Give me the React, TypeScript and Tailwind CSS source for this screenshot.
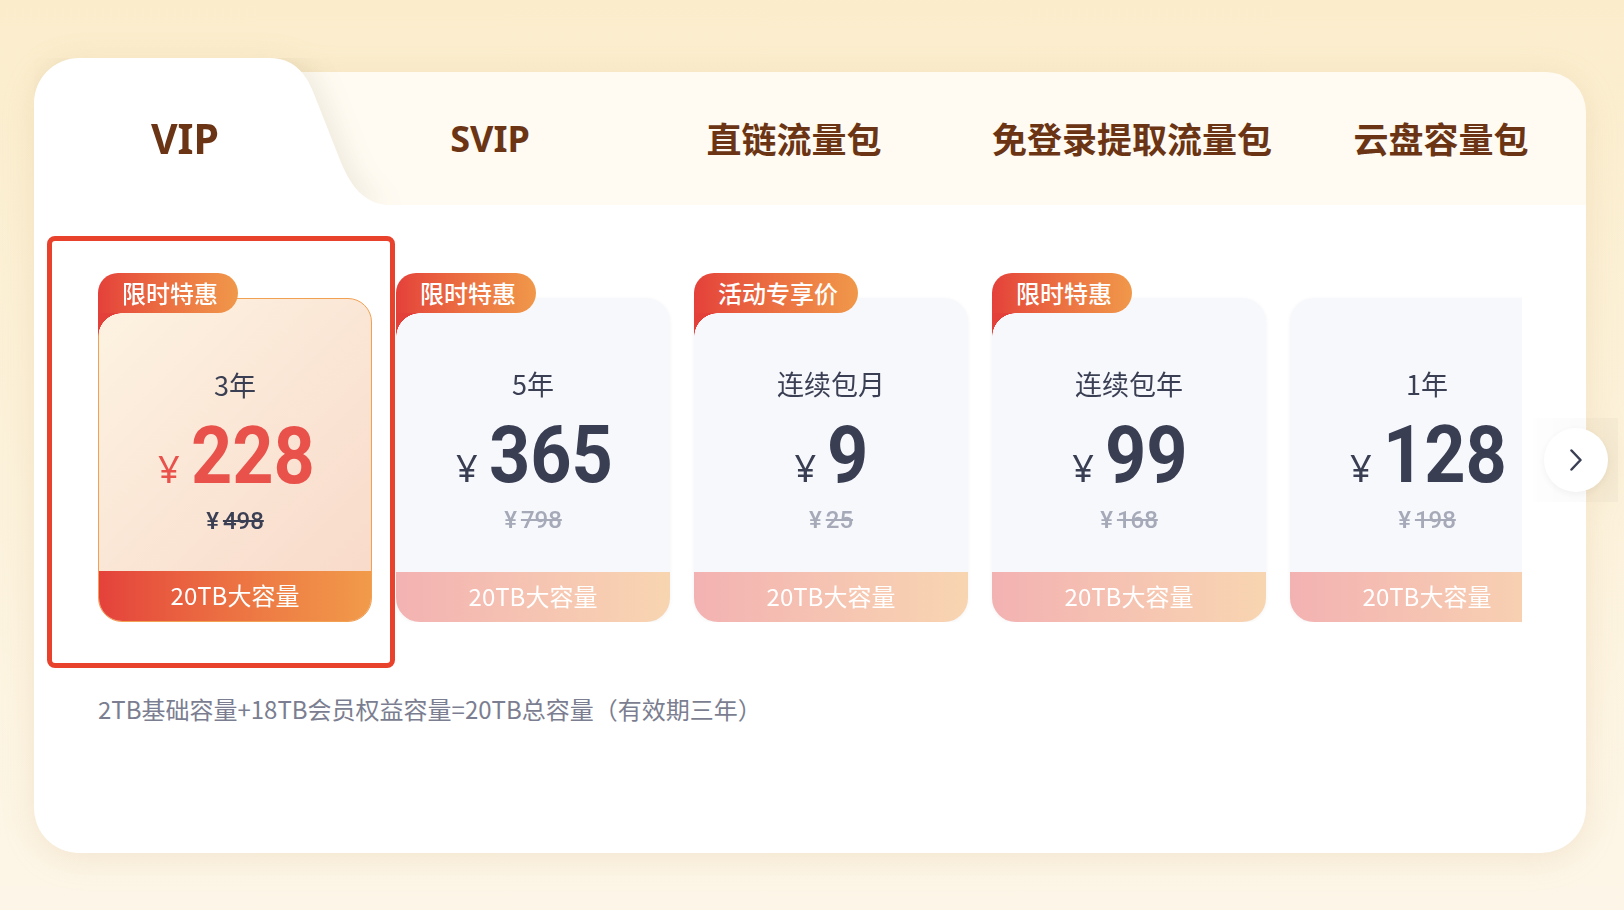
const plans = [
  { tag: "限时特惠", period: "3年", price: "228", old: "498", active: true },
  { tag: "限时特惠", period: "5年", price: "365", old: "798" },
  { tag: "活动专享价", period: "连续包月", price: "9", old: "25" },
  { tag: "限时特惠", period: "连续包年", price: "99", old: "168" },
  { tag: "", period: "1年", price: "128", old: "198" },
];

const tabs = [
  { label: "SVIP", w: "w-[308px]", latin: true },
  { label: "直链流量包", w: "w-[300px]" },
  { label: "免登录提取流量包", w: "w-[376px]" },
  { label: "云盘容量包", w: "w-[242px]" },
];

type Plan = (typeof plans)[number];

function PlanCard({ plan }: { plan: Plan }) {
  const active = !!plan.active;
  return (
    <div className="relative w-[274px] shrink-0 pt-[25px]">
      {plan.tag && (
        <>
          <div className="absolute left-0 top-0 z-10 flex h-[40px] items-center rounded-tl-[20px] rounded-r-[20px] bg-gradient-to-r from-[#e4403a] to-[#f0984a] pl-[24px] pr-[20px] text-[24px] font-medium leading-none text-white">
            {plan.tag}
          </div>
          <div className="absolute left-0 top-[40px] z-10 h-[24px] w-[24px] bg-[radial-gradient(circle_at_100%_100%,transparent_23.5px,#e4403a_24px)]" />
        </>
      )}
      <div
        className={
          active
            ? "flex h-[324px] flex-col items-center overflow-hidden rounded-[24px] rounded-tl-none border-[1.5px] border-[#f2a052] bg-[linear-gradient(135deg,#fdf3e2,#f8d8c8)]"
            : plan.tag
              ? "flex h-[324px] flex-col items-center overflow-hidden rounded-[24px] rounded-tl-none bg-[#f7f8fc] shadow-[0_1px_4px_rgba(0,0,0,0.05)]"
              : "flex h-[324px] flex-col items-center overflow-hidden rounded-[24px] bg-[#f7f8fc] shadow-[0_1px_4px_rgba(0,0,0,0.05)]"
        }
      >
        <div className="mt-[70px] text-[27px] leading-[32px] text-[#3b3f54]">{plan.period}</div>
        <div className={active ? "mt-[15px] flex items-baseline text-[#e9514b]" : "mt-[15px] flex items-baseline text-[#3a3e53]"}>
          <span className="mr-[11px] font-['Noto_Sans'] text-[38px] leading-none">¥</span>
          <span
            className="inline-block origin-left scale-x-[0.9] whitespace-nowrap font-['Roboto'] text-[80px] font-bold leading-none"
            style={{ width: plan.price.length * 40.5 }}
          >
            {plan.price}
          </span>
        </div>
        <div
          className={
            active
              ? "mt-[11px] flex items-baseline gap-[4px] font-['Roboto'] text-[24px] font-medium leading-[28px] text-[#3b3f54]"
              : "mt-[11px] flex items-baseline gap-[4px] font-['Roboto'] text-[24px] font-medium leading-[28px] text-[#a5a9b8]"
          }
        >
          <span>¥</span>
          <span className="line-through">{plan.old}</span>
        </div>
        <div
          className={
            active
              ? "mt-auto flex h-[50px] w-full items-center justify-center bg-gradient-to-r from-[#e4413b] to-[#f19b4a] pb-[3px] text-[24px] leading-none text-white"
              : "mt-auto flex h-[50px] w-full items-center justify-center bg-gradient-to-r from-[#f3b2b2] to-[#f8d5b1] pb-[3px] text-[24px] leading-none text-white"
          }
        >
          20TB大容量
        </div>
      </div>
    </div>
  );
}

export default function App() {
  return (
    <div className="min-h-screen w-full bg-gradient-to-b from-[#fbedcc] to-[#fdf6e8] pl-[34px] pt-[58px] pb-[56px] font-['Noto_Sans_CJK_SC',sans-serif]">
      <div className="w-[1552px] drop-shadow-[0_6px_16px_rgba(190,150,90,0.16)]">
        {/* Tabs */}
        <div className="relative flex h-[147px] items-end overflow-hidden">
          <div className="relative z-10 flex h-[147px] w-[302px] shrink-0 items-center justify-center pt-[14px]">
            <svg
              className="pointer-events-none absolute left-0 top-0 overflow-visible drop-shadow-[8px_0_12px_rgba(110,90,50,0.10)]"
              width="360"
              height="147"
              viewBox="0 0 360 147"
            >
              <path
                d="M0 147 V45 A45 45 0 0 1 45 0 H236 C258 0 272 14 280 36 L306 102 C316 127 330 147 356 147 Z"
                fill="#fff"
              />
            </svg>
            <span className="relative font-['Noto_Sans'] text-[41px] font-bold text-[#6b3515]">VIP</span>
          </div>
          <div className="-ml-[80px] flex h-[133px] flex-1 items-center rounded-tr-[40px] bg-[#fffbf2] pl-[80px]">
            {tabs.map((t) => (
              <div key={t.label} className={`${t.w} flex shrink-0 justify-center`}>
                <span
                  className={
                    t.latin
                      ? "font-['Noto_Sans'] text-[36px] font-bold text-[#6b3515]"
                      : "text-[35px] font-bold text-[#6b3515]"
                  }
                >
                  {t.label}
                </span>
              </div>
            ))}
          </div>
        </div>

        {/* Body */}
        <div className="relative h-[648px] rounded-b-[45px] bg-white px-[64px] pt-[68px]">
          <div className="pointer-events-none absolute left-[13px] top-[31px] z-20 h-[432px] w-[348px] rounded-[8px] border-[5px] border-[#e8412c]" />

          <div className="flex gap-[24px] overflow-hidden">
            {plans.map((p) => (
              <PlanCard key={p.period} plan={p} />
            ))}
          </div>

          <p className="mt-[71px] text-[24px] leading-[32px] text-[#7b7e90]">
            2TB基础容量+18TB会员权益容量=20TB总容量（有效期三年）
          </p>

          <div className="absolute left-[1499px] top-[213px] h-[84px] w-[85px] bg-gradient-to-r from-black/[0.005] to-black/[0.025]" />
          <button className="absolute left-[1510px] top-[223px] flex h-[64px] w-[64px] items-center justify-center rounded-full bg-white shadow-[0_2px_10px_rgba(0,0,0,0.06)]">
            <svg width="12" height="22" viewBox="0 0 12 22" fill="none">
              <path d="M1.5 1.5 L10.5 11 L1.5 20.5" stroke="#3a3f55" strokeWidth="2.5" strokeLinecap="round" strokeLinejoin="round" />
            </svg>
          </button>
        </div>
      </div>
    </div>
  );
}
